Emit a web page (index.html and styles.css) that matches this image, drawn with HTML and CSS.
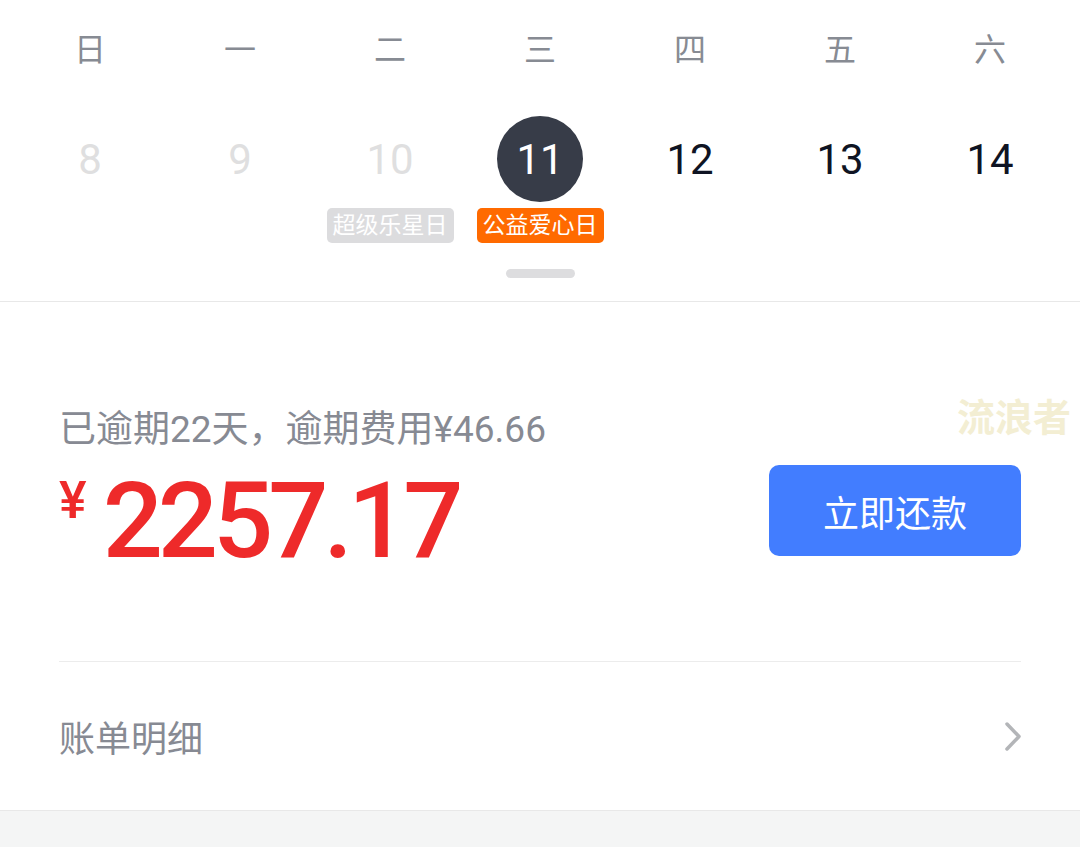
FILE: index.html
```html
<!DOCTYPE html>
<html>
    <head>
        <meta charset="utf-8">
        <title>账单</title>
        <link rel="stylesheet" href="styles.css">
    </head>
    <body>
        <div class="calendar">
            <div class="week">
                <span>日</span>
                <span>一</span>
                <span>二</span>
                <span>三</span>
                <span>四</span>
                <span>五</span>
                <span>六</span>
            </div>
            <div class="dates">
                <div class="day past"><span class="num">8</span></div>
                <div class="day past"><span class="num">9</span></div>
                <div class="day past">
                    <span class="num">10</span>
                    <span class="tag grey">超级乐星日</span>
                </div>
                <div class="day today">
                    <span class="num">11</span>
                    <span class="tag orange">公益爱心日</span>
                </div>
                <div class="day"><span class="num">12</span></div>
                <div class="day"><span class="num">13</span></div>
                <div class="day"><span class="num">14</span></div>
            </div>
            <div class="handle"></div>
        </div>

        <div class="bill">
            <div class="watermark">流浪者</div>
            <div class="summary">
                <div class="left">
                    <div class="overdue">已逾期22天，逾期费用¥46.66</div>
                    <div class="amount">
                        <span class="yen">¥</span>
                        <span class="value">2257.17</span>
                    </div>
                </div>
                <button class="pay">立即还款</button>
            </div>
        </div>

        <div class="detail">
            <span>账单明细</span>
            <svg class="arrow" width="18" height="31" viewBox="0 0 18 31">
                <polyline points="3,3 15,15.5 3,28" fill="none" stroke="#b3b5b8" stroke-width="3.5" stroke-linecap="round" stroke-linejoin="round"/>
            </svg>
        </div>

        <div class="footer"></div>
    </body>
</html>
```

FILE: styles.css
```css
body {
    margin: 0;
    background: #fff;
    font-family: Roboto, "Noto Sans CJK SC", sans-serif;
}
.calendar {
    padding: 0 15px 23px;
    border-bottom: 1px solid #e8e8e8;
}
.week {
    display: grid;
    grid-template-columns: repeat(7, 1fr);
    height: 94px;
    align-items: center;
    text-align: center;
    font-size: 32px;
    color: #878b93;
}
.dates {
    display: grid;
    grid-template-columns: repeat(7, 1fr);
    padding-top: 22px;
    height: 127px;
}
.day {
    display: flex;
    flex-direction: column;
    align-items: center;
}
.num {
    width: 86px;
    height: 86px;
    border-radius: 50%;
    display: flex;
    align-items: center;
    justify-content: center;
    font-size: 42px;
    color: #0f1423;
}
.past .num {
    color: #dfdfe0;
}
.today .num {
    background: #373c48;
    color: #fff;
}
.tag {
    margin-top: 6px;
    padding: 0 6px;
    height: 35px;
    line-height: 35px;
    border-radius: 5px;
    font-size: 23px;
    color: #fff;
    white-space: nowrap;
}
.grey {
    background: #dcdcde;
}
.orange {
    background: #ff6a00;
}
.handle {
    width: 69px;
    height: 9px;
    border-radius: 5px;
    background: #dddddf;
    margin: 26px auto 0;
}
.bill {
    position: relative;
    padding: 0 59px;
}
.watermark {
    position: absolute;
    left: 957px;
    top: 94px;
    font-size: 38px;
    font-weight: bold;
    color: #f3eed3;
    line-height: 44px;
}
.summary {
    display: flex;
    justify-content: space-between;
    align-items: flex-start;
    padding: 103px 0 87px;
    border-bottom: 1px solid #ececec;
}
.overdue {
    font-size: 37px;
    line-height: 50px;
    color: #878a93;
}
.amount {
    display: flex;
    align-items: flex-start;
    margin-top: 13px;
    color: #ee2a2a;
}
.yen {
    font-size: 52px;
    line-height: 52px;
    font-weight: 500;
    margin-top: 7px;
    margin-right: 16px;
}
.value {
    font-size: 106px;
    line-height: 106px;
    font-weight: 500;
    letter-spacing: -5px;
}
.pay {
    margin-top: 60px;
    width: 252px;
    height: 91px;
    border: none;
    border-radius: 10px;
    background: #427dff;
    color: #fff;
    font-family: inherit;
    font-size: 36px;
}
.detail {
    display: flex;
    justify-content: space-between;
    align-items: center;
    height: 148px;
    padding: 0 58px 0 59px;
    border-bottom: 1px solid #e8e8e8;
    font-size: 36px;
    color: #878a93;
}
.footer {
    height: 40px;
    background: #f4f5f5;
}
```
